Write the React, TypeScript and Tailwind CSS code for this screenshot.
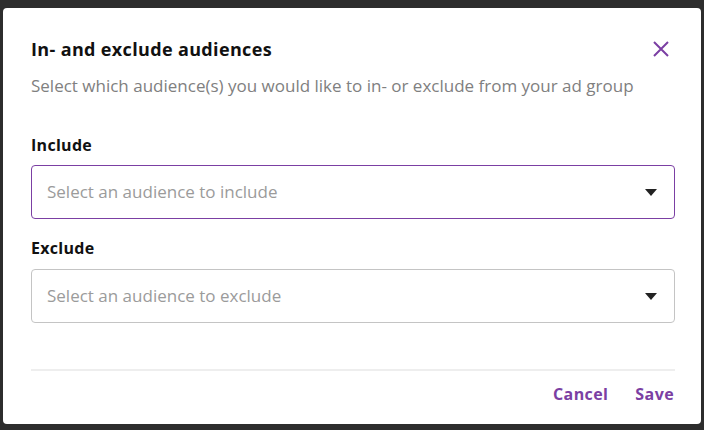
function SelectBox({ placeholder, active }: { placeholder: string; active?: boolean }) {
  return (
    <div
      className={
        active
          ? 'flex h-[54px] items-center justify-between rounded-[4px] border border-[#7b3fa3] pl-[15px] pr-[17px]'
          : 'flex h-[54px] items-center justify-between rounded-[4px] border border-[#c4c4c4] pl-[15px] pr-[17px]'
      }
    >
      <span className="text-[17px] leading-[24px] text-[#9b9b9b]">{placeholder}</span>
      <svg width="12" height="7" viewBox="0 0 12 7" className="mt-[1px]">
        <path d="M0 0h12L6 7z" fill="#222" />
      </svg>
    </div>
  )
}

export default function App() {
  return (
    <div className="h-[430px] w-[704px] bg-[#2d2d2d] px-[3px] pt-[8px] font-['Open_Sans',sans-serif]">
      <div className="h-[416px] rounded-[4px] bg-white pl-[28px] pr-[26px] pt-[29px]">
        <div className="flex items-center justify-between">
          <h2 className="text-[18px] font-bold leading-[24px] tracking-[0.35px] text-[#111]">In- and exclude audiences</h2>
          <svg width="16" height="16" viewBox="0 0 16 16" className="mr-[6px]">
            <path d="M1 1L15 15M15 1L1 15" stroke="#7b3fa3" strokeWidth="2" />
          </svg>
        </div>
        <p className="mt-[13px] text-[17px] leading-[24px] text-[#808080]">
          Select which audience(s) you would like to in- or exclude from your ad group
        </p>

        <div className="mt-[35px] text-[16px] font-bold leading-[24px] tracking-[0.3px] text-[#111]">Include</div>
        <div className="mt-[8px]">
          <SelectBox placeholder="Select an audience to include" active />
        </div>

        <div className="mt-[17px] text-[16px] font-bold leading-[24px] tracking-[0.3px] text-[#111]">Exclude</div>
        <div className="mt-[9px]">
          <SelectBox placeholder="Select an audience to exclude" />
        </div>

        <div className="mt-[46px] h-[2px] bg-[#eeeeee]" />

        <div className="mt-[11px] flex justify-end gap-[27px] pr-[1px]">
          <button className="text-[16px] font-bold leading-[24px] tracking-[0.4px] text-[#7b3fa3]">Cancel</button>
          <button className="text-[16px] font-bold leading-[24px] tracking-[0.4px] text-[#7b3fa3]">Save</button>
        </div>
      </div>
    </div>
  )
}
